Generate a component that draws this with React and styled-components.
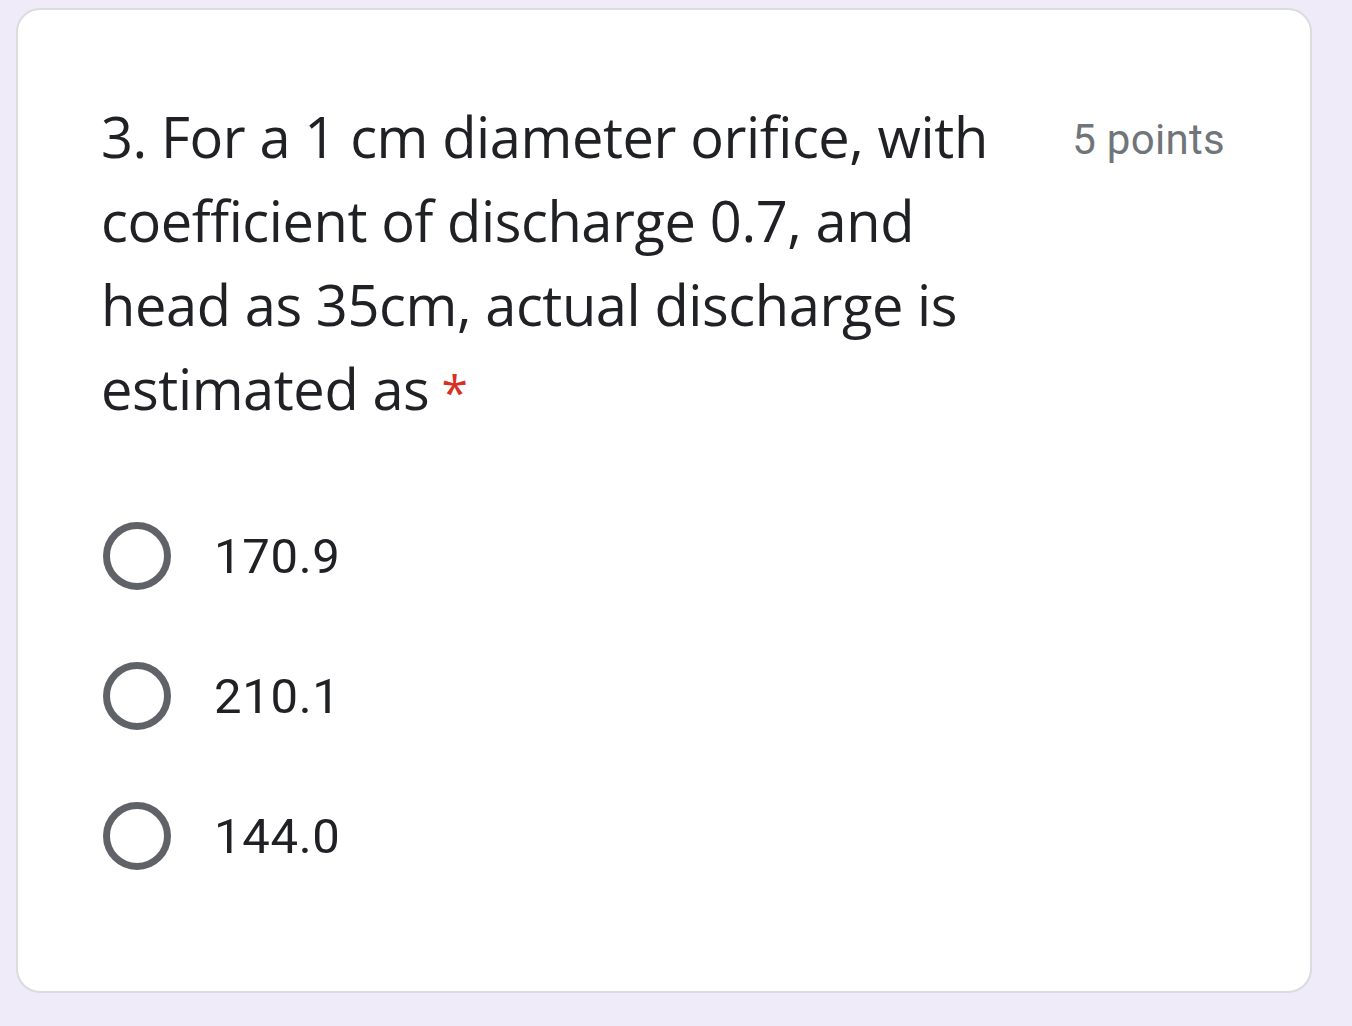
import React from "react";
import styled, { createGlobalStyle } from "styled-components";

const GlobalStyle = createGlobalStyle`
  html, body {
    margin: 0;
    padding: 0;
    background: #efebf8;
  }
`;

const Page = styled.div`
  padding: 8px 40px 32px 16px;
  min-height: 1026px;
  box-sizing: border-box;
`;

const Card = styled.div`
  width: 1296px;
  height: 985px;
  box-sizing: border-box;
  background: #ffffff;
  border: 2px solid #dadce0;
  border-radius: 24px;
  padding: 84px 85px 0 83px;
`;

const Header = styled.div`
  display: flex;
  justify-content: space-between;
  align-items: flex-start;
`;

const Title = styled.div`
  font-family: "Open Sans", sans-serif;
  font-size: 56px;
  line-height: 84px;
  color: #202124;
  letter-spacing: -0.4px;
`;

const Required = styled.span`
  color: #d93025;
  margin-left: 12px;
  font-size: 48px;
  line-height: 1;
`;

const Points = styled.div`
  font-family: Roboto, sans-serif;
  font-size: 42px;
  line-height: 84px;
  color: #70757a;
  padding-top: 4px;
  letter-spacing: 0.3px;
`;

const Options = styled.div`
  display: flex;
  flex-direction: column;
  margin-top: 56px;
`;

const Option = styled.label`
  display: flex;
  align-items: center;
  height: 140px;
  gap: 43px;
  padding-left: 2px;
`;

const Radio = styled.span`
  width: 68px;
  height: 68px;
  box-sizing: border-box;
  border: 7px solid #5f6368;
  border-radius: 50%;
  flex-shrink: 0;
`;

const OptionText = styled.span`
  font-family: Roboto, sans-serif;
  font-size: 49px;
  color: #202124;
  letter-spacing: 0.7px;
`;

const options = ["170.9", "210.1", "144.0"];

export default function App() {
  return (
    <>
      <GlobalStyle />
      <Page>
        <Card>
          <Header>
            <Title>
              3. For a 1 cm diameter orifice, with
              <br />
              coefficient of discharge 0.7, and
              <br />
              head as 35cm, actual discharge is
              <br />
              estimated as<Required>*</Required>
            </Title>
            <Points>5 points</Points>
          </Header>
          <Options>
            {options.map((o) => (
              <Option key={o}>
                <Radio />
                <OptionText>{o}</OptionText>
              </Option>
            ))}
          </Options>
        </Card>
      </Page>
    </>
  );
}
